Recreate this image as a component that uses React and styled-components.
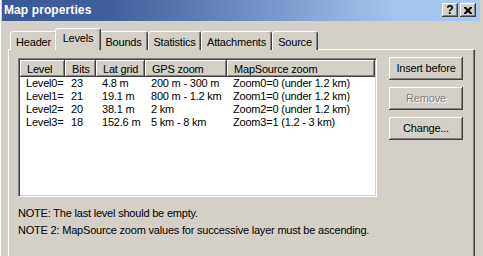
import React from "react";
import styled, { createGlobalStyle, css } from "styled-components";

const Global = createGlobalStyle`
  html, body { margin: 0; padding: 0; background: #d4d0c8; overflow: hidden; }
  body { font-family: "Liberation Sans", Arial, sans-serif; font-size: 11px; color: #000; letter-spacing: -0.2px; }
`;

const Window = styled.div`
  width: 483px;
  height: 256px;
  background: #d4d0c8;
  padding-left: 2px;
  box-sizing: border-box;
  box-shadow: inset 1px 0 #ffffff;
  overflow: hidden;
`;

const TitleBar = styled.div`
  height: 21px;
  margin-right: 3px;
  display: flex;
  align-items: center;
  padding: 0 4px 1px 2px;
  background: linear-gradient(to right, #3a5996 0%, #3f5e9b 22%, #6d8cc2 50%, #a4c4ee 82%, #a8c9f0 100%);
  box-sizing: border-box;
`;

const Title = styled.div`
  flex: 1;
  color: #fff;
  font-weight: bold;
  font-size: 12px;
  letter-spacing: 0.1px;
`;

const CaptionButton = styled.div`
  width: 16px;
  height: 14px;
  margin-left: ${(p) => (p.$first ? 0 : 2)}px;
  background: #d4d0c8;
  box-sizing: border-box;
  box-shadow: inset -1px -1px #404040, inset 1px 1px #ffffff, inset -2px -2px #808080;
  display: flex;
  align-items: center;
  justify-content: center;
  font-weight: bold;
  font-size: 12px;
  line-height: 12px;
  letter-spacing: 0;
  color: #000;
`;

const Body = styled.div`
  padding: 7px 0 0 6px;
`;

const TabRow = styled.div`
  display: flex;
  align-items: flex-end;
  height: 22px;
  padding-left: 2px;
  position: relative;
  z-index: 1;
`;

const Tab = styled.div`
  width: ${(p) => p.$w}px;
  height: 19px;
  box-sizing: border-box;
  background: #d4d0c8;
  border-top: 1px solid #fff;
  border-left: 1px solid #fff;
  border-right: 1px solid #404040;
  box-shadow: inset -1px 0 #808080;
  border-radius: 3px 3px 0 0;
  display: flex;
  align-items: center;
  justify-content: center;
  padding-top: 1px;
  ${(p) =>
    p.$active &&
    css`
      height: 22px;
      width: ${p.$w + 4}px;
      margin: 0 -2px 0 -2px;
      padding-top: 0;
      padding-bottom: 3px;
      position: relative;
      z-index: 2;
    `}
`;

const Panel = styled.div`
  width: 467px;
  height: 215px;
  margin-top: -1px;
  box-sizing: border-box;
  border-top: 1px solid #fff;
  border-left: 1px solid #fff;
  border-right: 1px solid #404040;
  box-shadow: inset -1px 0 #808080;
  padding: 8px 0 0 9px;
`;

const TopArea = styled.div`
  display: flex;
  align-items: flex-start;
  gap: 12px;
`;

const ListView = styled.div`
  width: 359px;
  height: 139px;
  box-sizing: border-box;
  background: #fff;
  border-top: 1px solid #808080;
  border-left: 1px solid #808080;
  border-right: 1px solid #fff;
  border-bottom: 1px solid #fff;
  box-shadow: inset 1px 1px #404040, inset -1px -1px #d4d0c8;
  padding: 1px;
`;

const Grid = styled.div`
  display: grid;
  grid-template-columns: 45px 31px 49px 82px 148px;
`;

const HeaderCell = styled.div`
  height: 17px;
  box-sizing: border-box;
  background: #d4d0c8;
  box-shadow: inset -1px -1px #404040, inset 1px 1px #ffffff, inset -2px -2px #808080;
  padding: 0 0 0 7px;
  display: flex;
  align-items: center;
  white-space: nowrap;
  overflow: hidden;
`;

const Cell = styled.div`
  height: 13px;
  line-height: 13px;
  padding-left: 6px;
  white-space: nowrap;
  overflow: hidden;
`;

const ButtonColumn = styled.div`
  display: flex;
  flex-direction: column;
  gap: 7px;
  margin-top: -1px;
`;

const Button = styled.div`
  width: 74px;
  height: 23px;
  box-sizing: border-box;
  background: #d4d0c8;
  box-shadow: inset -1px -1px #404040, inset 1px 1px #ffffff, inset -2px -2px #808080;
  display: flex;
  align-items: center;
  justify-content: center;
  padding-bottom: 1px;
  color: ${(p) => (p.$disabled ? "#808080" : "#000")};
  text-shadow: ${(p) => (p.$disabled ? "1px 1px #ffffff" : "none")};
`;

const Notes = styled.div`
  margin-top: 8px;
  line-height: 17px;
`;

const tabs = [
  { label: "Header", w: 47 },
  { label: "Levels", w: 42, active: true },
  { label: "Bounds", w: 49 },
  { label: "Statistics", w: 53 },
  { label: "Attachments", w: 71 },
  { label: "Source", w: 46 },
];

const headers = ["Level", "Bits", "Lat grid", "GPS zoom", "MapSource zoom"];
const rows = [
  ["Level0=", "23", "4.8 m", "200 m - 300 m", "Zoom0=0 (under 1.2 km)"],
  ["Level1=", "21", "19.1 m", "800 m - 1.2 km", "Zoom1=0 (under 1.2 km)"],
  ["Level2=", "20", "38.1 m", "2 km", "Zoom2=0 (under 1.2 km)"],
  ["Level3=", "18", "152.6 m", "5 km - 8 km", "Zoom3=1 (1.2 - 3 km)"],
];

export default function App() {
  return (
    <>
      <Global />
      <Window>
        <TitleBar>
          <Title>Map properties</Title>
          <CaptionButton $first>?</CaptionButton>
          <CaptionButton>
            <svg width="8" height="7" viewBox="0 0 8 7">
              <path d="M0 0h2l2 2 2-2h2v1L5.5 3.5 8 6v1H6L4 5 2 7H0V6l2.5-2.5L0 1z" fill="#000" />
            </svg>
          </CaptionButton>
        </TitleBar>
        <Body>
          <TabRow>
            {tabs.map((t) => (
              <Tab key={t.label} $w={t.w} $active={t.active}>
                {t.label}
              </Tab>
            ))}
          </TabRow>
          <Panel>
            <TopArea>
              <ListView>
                <Grid>
                  {headers.map((h) => (
                    <HeaderCell key={h}>{h}</HeaderCell>
                  ))}
                  {rows.map((r) =>
                    r.map((c, i) => <Cell key={r[0] + i}>{c}</Cell>)
                  )}
                </Grid>
              </ListView>
              <ButtonColumn>
                <Button>Insert before</Button>
                <Button $disabled>Remove</Button>
                <Button>Change...</Button>
              </ButtonColumn>
            </TopArea>
            <Notes>
              <div>NOTE: The last level should be empty.</div>
              <div>NOTE 2: MapSource zoom values for successive layer must be ascending.</div>
            </Notes>
          </Panel>
        </Body>
      </Window>
    </>
  );
}
